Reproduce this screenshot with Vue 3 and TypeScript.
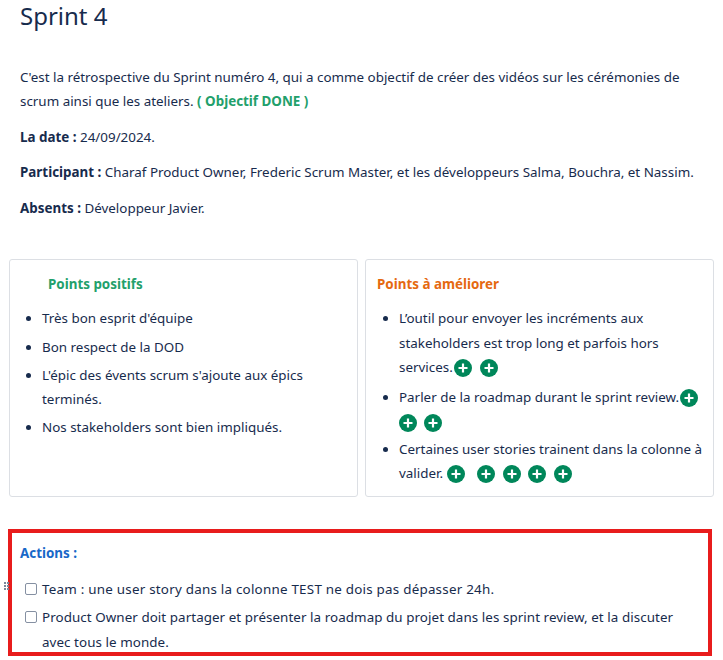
<script setup lang="ts">
const plus = 'M9 4.5v9M4.5 9h9'
interface Item { text: string; icons: number[] }
const better: Item[] = [
  { text: 'L’outil pour envoyer les incréments aux stakeholders est trop long et parfois hors services.', icons: [-2, 8] },
  { text: 'Parler de la roadmap durant le sprint review.', icons: [-2, 0, 7] },
  { text: 'Certaines user stories trainent dans la colonne à valider.', icons: [1, 12, 8, 7, 8] },
]
const good = ['Très bon esprit d\'équipe', 'Bon respect de la DOD', 'L\'épic des évents scrum s\'ajoute aux épics terminés.', 'Nos stakeholders sont bien impliqués.']
const actions = [
  'Team : une user story dans la colonne TEST ne dois pas dépasser 24h.',
  'Product Owner doit partager et présenter la roadmap du projet dans les sprint review, et la discuter avec tous le monde.',
]
</script>

<template>
  <main class="page">
    <h1 class="title">Sprint 4</h1>
    <section class="intro">
      <p>C'est la rétrospective du Sprint numéro 4, qui a comme objectif de créer des vidéos sur les cérémonies de scrum ainsi que les ateliers. <strong class="done">( Objectif DONE )</strong></p>
      <p><strong>La date : </strong>24/09/2024.</p>
      <p><strong>Participant : </strong>Charaf Product Owner, Frederic Scrum Master, et les développeurs Salma, Bouchra, et Nassim.</p>
      <p><strong>Absents : </strong>Développeur Javier.</p>
    </section>

    <section class="cards">
      <article class="card">
        <h2 class="card-title good">Points positifs</h2>
        <ul class="list">
          <li v-for="g in good" :key="g">{{ g }}</li>
        </ul>
      </article>
      <article class="card card-right">
        <h2 class="card-title warn">Points à améliorer</h2>
        <ul class="list tight">
          <li v-for="b in better" :key="b.text">
            {{ b.text }}
            <svg v-for="(m, i) in b.icons" :key="i" class="plus" :style="{ marginLeft: m + 'px' }" width="18" height="18" viewBox="0 0 18 18" aria-hidden="true">
              <circle cx="9" cy="9" r="9" fill="#00875a" />
              <path :d="plus" stroke="#fff" stroke-width="2.2" fill="none" />
            </svg>
          </li>
        </ul>
      </article>
    </section>

    <section class="actions">
      <span class="grip" aria-hidden="true"><i></i><i></i><i></i><i></i><i></i><i></i></span>
      <h2 class="card-title blue">Actions :</h2>
      <div v-for="a in actions" :key="a" class="task">
        <span class="box"></span>
        <span class="task-text">{{ a }}</span>
      </div>
    </section>
  </main>
</template>

<style scoped>
.page {
  width: 723px;
  height: 660px;
  overflow: hidden;
  box-sizing: border-box;
  font-family: "Noto Sans", "Open Sans", sans-serif;
  font-size: 13.4px;
  line-height: 24px;
  color: #172b4d;
  background: #fff;
  padding-top: 1px;
}
.title {
  margin: 0 0 0 20px;
  font-size: 24px;
  line-height: 30px;
  font-weight: 400;
}
.intro {
  margin: 0 20px;
  padding-top: 34px;
}
.intro p {
  margin: 0 0 11.6px;
}
.intro strong {
  font-weight: 700;
}
.intro .done {
  color: #22a06b;
}
.cards {
  display: grid;
  grid-template-columns: 349px 349px;
  gap: 7px;
  margin: 39.6px 0 0 9px;
}
.card {
  height: 238px;
  box-sizing: border-box;
  border: 1px solid #dcdfe4;
  border-radius: 3px;
  padding: 12px 11px 0 11px;
}
.card-right {
  padding-right: 7px;
}
.card-title {
  margin: 0;
  font-size: 13.4px;
  line-height: 24px;
  font-weight: 700;
}
.good {
  color: #22a06b;
  padding-left: 27px;
}
.warn {
  color: #e56910;
}
.blue {
  color: #1868c8;
}
.list {
  margin: 10px 0 0;
  padding: 0 0 0 21px;
}
.list li {
  margin-bottom: 4.2px;
}
.card-right .list {
  padding-left: 22px;
}
.tight {
  line-height: 24.4px;
}
.tight li:first-child {
  margin-bottom: 5.5px;
}
.tight li {
  margin-bottom: 3px;
}
.plus {
  vertical-align: -5px;
}
.actions {
  position: relative;
  width: 704px;
  height: 127px;
  box-sizing: border-box;
  margin: 32px 0 0 8px;
  border: 4px solid #e81c1c;
  padding: 8px 8px 0 8px;
}
.task {
  display: flex;
  gap: 5px;
  margin: 0 0 4px 5px;
}
.task-text {
  max-width: 640px;
  line-height: 24.5px;
  letter-spacing: 0.06px;
}
.task:first-of-type .task-text {
  letter-spacing: 0.23px;
}
.actions .blue {
  margin-bottom: 11.5px;
}
.box {
  flex: none;
  width: 10px;
  height: 10px;
  margin-top: 6px;
  border: 1px solid #8590a2;
  border-radius: 2px;
}
.grip {
  position: absolute;
  left: -8px;
  top: 49px;
  display: grid;
  grid-template-columns: 2px 2px;
  gap: 1px;
}
.grip i {
  width: 2px;
  height: 2px;
  background: #7a869a;
}
</style>
